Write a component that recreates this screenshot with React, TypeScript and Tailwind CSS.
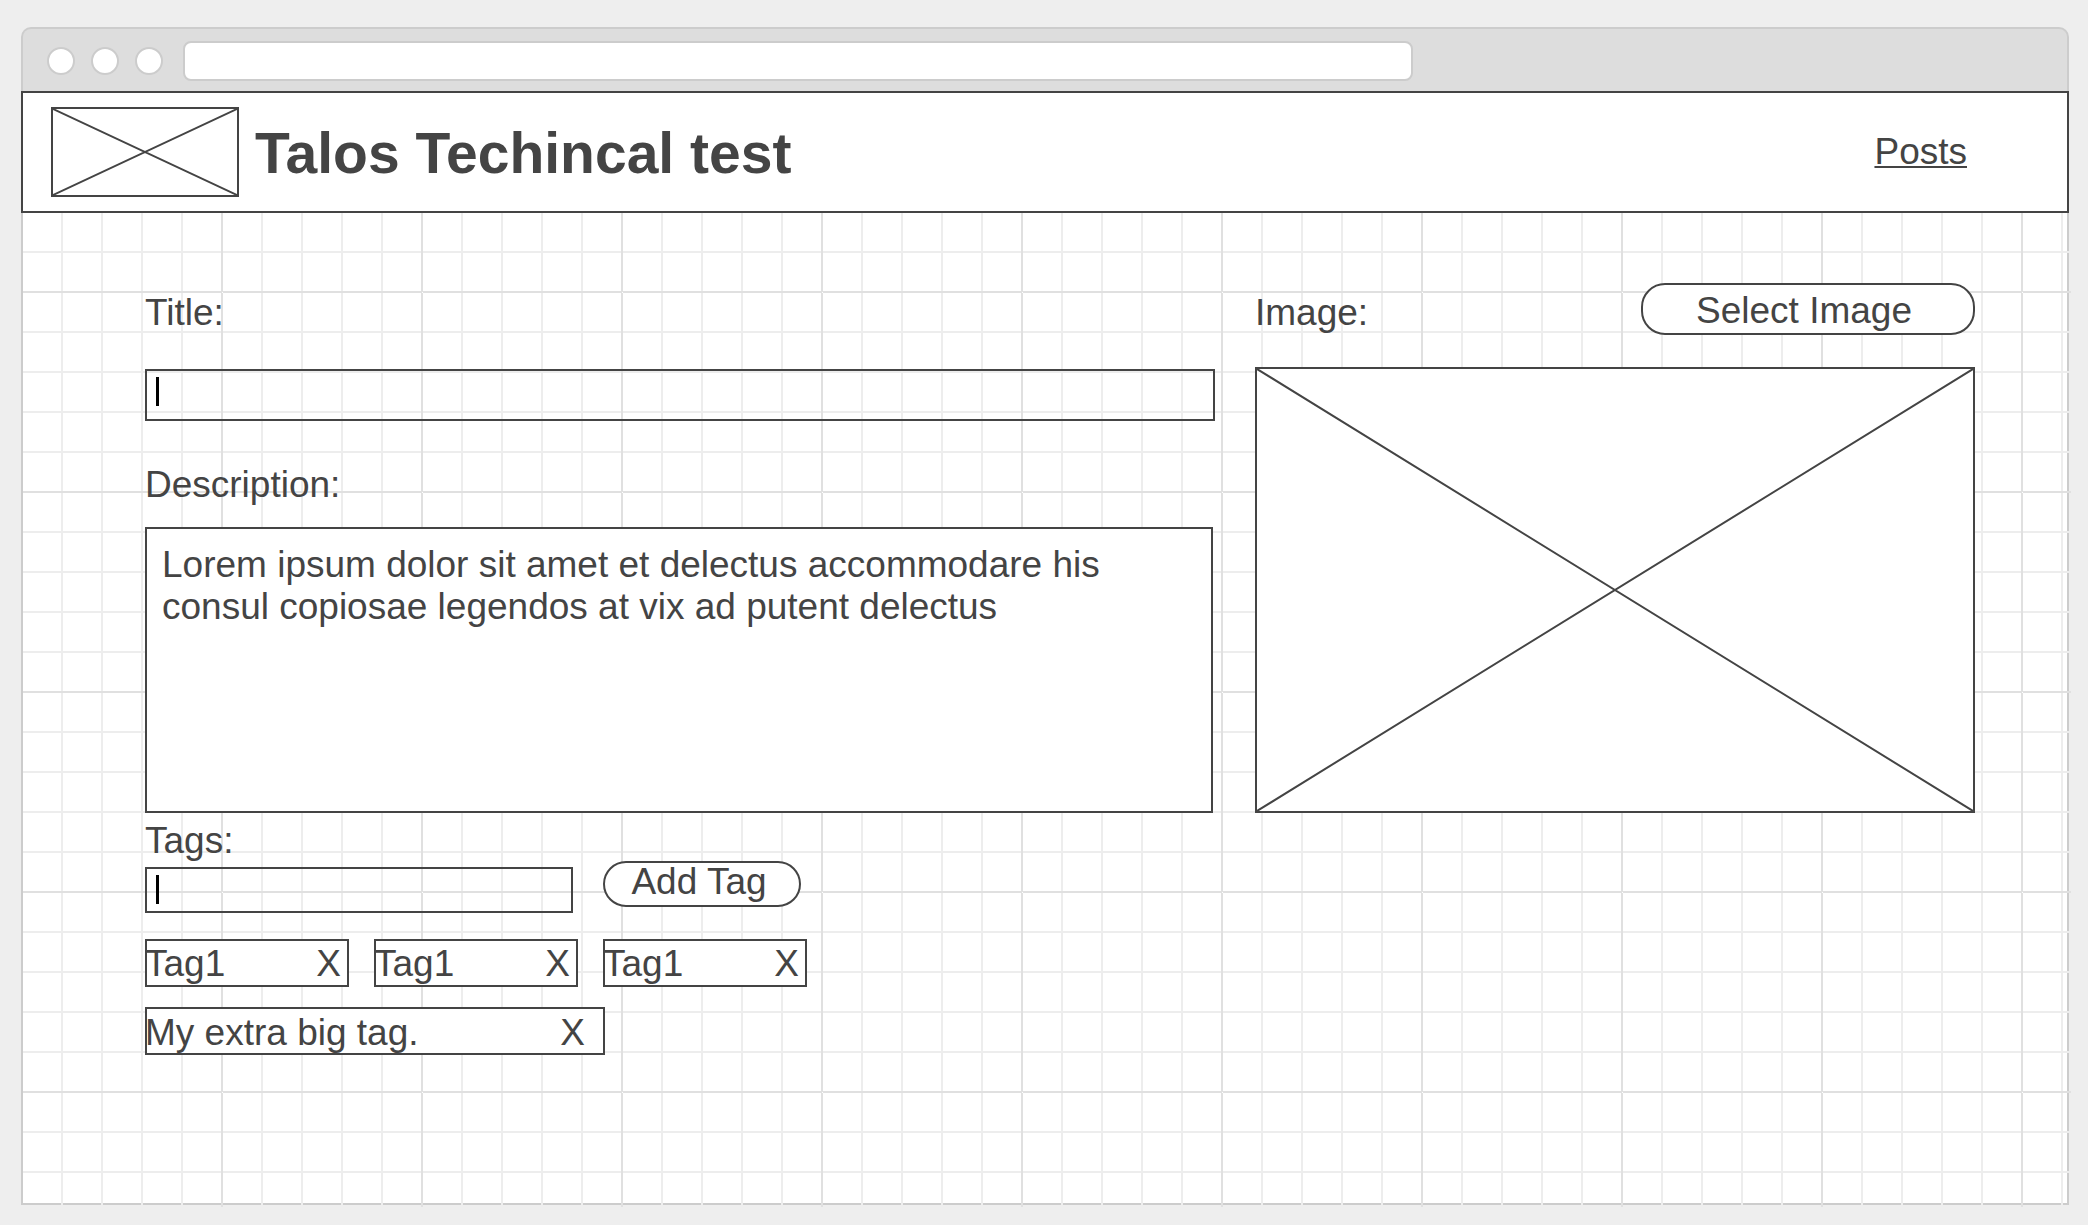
import React from "react";
import clsx from "clsx";

function GridPaper() {
  return (
    <svg
      aria-hidden="true"
      className="pointer-events-none absolute top-0 -right-1 -bottom-1 left-0 h-[calc(100%+4px)] w-[calc(100%+4px)]"
    >
      <defs>
        <pattern id="minor" x="-2" y="-2" width="40" height="40" patternUnits="userSpaceOnUse">
          <path d="M0 0H40V2H2V40H0Z" fill="#ededed" />
        </pattern>
        <pattern id="major" x="-2" y="78" width="200" height="200" patternUnits="userSpaceOnUse">
          <path d="M0 0H200V2H2V200H0Z" fill="#e0e0e0" />
          <rect x="1" y="1" width="1" height="1" fill="#fff" />
        </pattern>
      </defs>
      <rect className="h-[calc(100%-2px)] w-[calc(100%-2px)]" fill="url(#minor)" />
      <rect className="h-full w-full" fill="url(#major)" />
    </svg>
  );
}

function ImagePlaceholder({ label, className }: { label: string; className: string }) {
  return (
    <div role="img" aria-label={label} className={clsx("border-2 border-[#444] bg-white", className)}>
      <svg viewBox="0 0 100 100" preserveAspectRatio="none" className="block h-full w-full" stroke="#444" strokeWidth="2">
        <path d="M0 0L100 100M0 100L100 0" vectorEffect="non-scaling-stroke" />
      </svg>
    </div>
  );
}

function TextBox({ id, className }: { id: string; className: string }) {
  return (
    <div className={clsx("relative", className)}>
      <input id={id} type="text" className="block h-full w-full border-2 border-[#444] bg-transparent px-3 outline-none" />
      <span aria-hidden="true" className="absolute top-2 left-[11px] h-[29px] w-[3px] bg-black" />
    </div>
  );
}

function Tag({ name, className }: { name: string; className: string }) {
  return (
    <li className={clsx("flex h-12 items-center justify-between border-2 border-[#444] bg-white", className)}>
      <span className="-ml-0.5">{name}</span>
      <button type="button" aria-label={`Remove ${name}`}>
        X
      </button>
    </li>
  );
}

export default function App() {
  return (
    <div className="flex min-h-screen flex-col bg-[#eee] pt-[27px] pr-[19px] pb-5 pl-[21px] font-['Liberation_Sans',Arial,sans-serif] text-[37px] leading-[42px] text-[#444]">
      <div className="flex items-center gap-4 rounded-t-[10px] border-2 border-b-0 border-[#ccc] bg-[#ddd] pt-3 pb-[10px] pl-6">
        <span className="size-7 rounded-full border-2 border-[#ccc] bg-white" />
        <span className="size-7 rounded-full border-2 border-[#ccc] bg-white" />
        <span className="size-7 rounded-full border-2 border-[#ccc] bg-white" />
        <input
          type="text"
          aria-label="Address"
          className="ml-1 h-10 w-[60.9%] rounded-lg border-2 border-[#ccc] bg-white px-3 text-xl outline-none"
        />
      </div>

      <header className="flex items-center border-2 border-[#444] bg-white py-[14px] pr-[100px] pl-7">
        <ImagePlaceholder label="Logo" className="h-[90px] w-[188px]" />
        <h1 className="ml-4 pt-0.5 text-[57px] leading-[64px] font-bold">Talos Techincal test</h1>
        <a href="#posts" className="ml-auto underline decoration-2 underline-offset-2">
          Posts
        </a>
      </header>

      <main className="relative flex-1 border-2 border-t-0 border-[#ccc] bg-white">
        <GridPaper />
        <form
          className="relative grid grid-cols-[107fr_72fr] gap-x-10 pt-[70px] pr-[92px] pb-20 pl-[122px]"
          onSubmit={(e) => e.preventDefault()}
        >
          <div className="flex flex-col">
            <label htmlFor="title" className="mt-[9px] self-start">
              Title:
            </label>
            <TextBox id="title" className="mt-[35px] h-[52px]" />
            <label htmlFor="description" className="mt-[43px] self-start">
              Description:
            </label>
            <textarea
              id="description"
              className="mt-[21px] mr-0.5 block h-[286px] resize-none border-2 border-[#444] bg-white py-[15px] pr-10 pl-[15px] outline-none"
              defaultValue="Lorem ipsum dolor sit amet et delectus accommodare his consul copiosae legendos at vix ad putent delectus"
            />
          </div>

          <div className="flex flex-col">
            <div className="flex items-start justify-between">
              <label htmlFor="select-image" className="mt-[9px]">
                Image:
              </label>
              <button
                id="select-image"
                type="button"
                className="h-[52px] w-[334px] rounded-3xl border-2 border-[#444] bg-white pt-1 pr-2"
              >
                Select Image
              </button>
            </div>
            <ImagePlaceholder label="Selected image" className="mt-8 min-h-0 flex-1 basis-0" />
          </div>

          <div className="mt-[7px] flex flex-col">
            <label htmlFor="tag" className="self-start">
              Tags:
            </label>
            <div className="-mt-px flex items-start gap-[30px]">
              <TextBox id="tag" className="mt-1.5 h-[46px] w-2/5" />
              <button type="button" className="h-[46px] w-[198px] rounded-3xl border-2 border-[#444] bg-white pr-1.5 pb-1">
                <span className="block h-9 leading-9">Add Tag</span>
              </button>
            </div>
            <ul className="mt-[26px] flex flex-wrap gap-x-[25px] gap-y-5">
              <Tag name="Tag1" className="w-[204px] pt-px pr-1.5" />
              <Tag name="Tag1" className="w-[204px] pt-px pr-1.5" />
              <Tag name="Tag1" className="w-[204px] pt-px pr-1.5" />
              <Tag name="My extra big tag." className="w-[460px] pt-1 pr-[18px]" />
            </ul>
          </div>
        </form>
      </main>
    </div>
  );
}
